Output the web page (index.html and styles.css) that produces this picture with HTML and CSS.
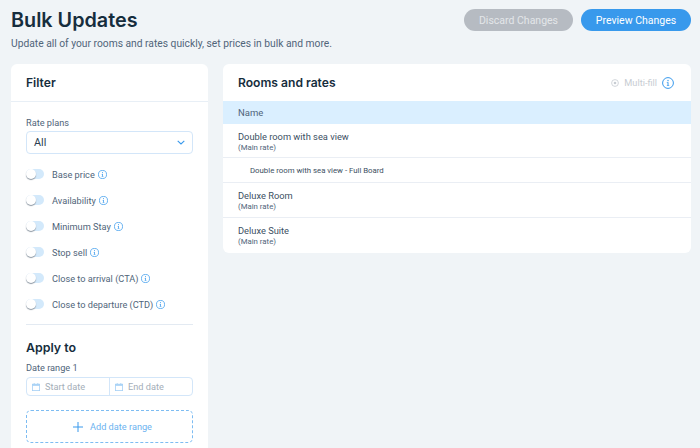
FILE: index.html
```html
<!DOCTYPE html>
<html lang="en">
<head>
<meta charset="utf-8">
<title>Bulk Updates</title>
<link rel="stylesheet" href="styles.css">
</head>
<body>
<svg class="defs" width="0" height="0" aria-hidden="true">
  <symbol id="info" viewBox="0 0 12 12">
    <circle cx="6" cy="6" r="5.4" fill="none" stroke="currentColor" stroke-width="1"/>
    <path d="M4.8 5.3H6.5V8.4H7.3V9H4.8V8.4H5.5V5.9H4.8Z" fill="currentColor"/>
    <rect x="5.4" y="2.9" width="1.2" height="1.3" fill="currentColor"/>
  </symbol>
  <symbol id="cal" viewBox="0 0 10 10">
    <rect x="0.5" y="1.5" width="9" height="8" fill="none" stroke="currentColor"/>
    <rect x="0.5" y="1.5" width="9" height="2" fill="currentColor"/>
    <rect x="2.2" y="0" width="1" height="2" fill="currentColor"/>
    <rect x="6.8" y="0" width="1" height="2" fill="currentColor"/>
  </symbol>
</svg>
<header class="top">
  <div class="top-text">
    <h1 class="title">Bulk Updates</h1>
    <p class="subtitle">Update all of your rooms and rates quickly, set prices in bulk and more.</p>
  </div>
  <div class="actions">
    <button class="btn btn-muted">Discard Changes</button>
    <button class="btn btn-primary">Preview Changes</button>
  </div>
</header>
<main class="columns">
  <section class="card filter">
    <h2 class="card-title filter-head">Filter</h2>
    <div class="filter-body">
      <label class="field-label">Rate plans</label>
      <div class="select"><span>All</span>
        <svg class="chev" width="8" height="5" viewBox="0 0 8 5"><path d="M.7.8 4 4 7.3.8" fill="none" stroke="currentColor" stroke-width="1.1"/></svg>
      </div>
      <ul class="toggles">
        <li class="toggle-row"><span class="toggle"></span><span>Base price</span><svg class="info-s"><use href="#info"/></svg></li>
        <li class="toggle-row"><span class="toggle"></span><span>Availability</span><svg class="info-s"><use href="#info"/></svg></li>
        <li class="toggle-row"><span class="toggle"></span><span>Minimum Stay</span><svg class="info-s"><use href="#info"/></svg></li>
        <li class="toggle-row"><span class="toggle"></span><span>Stop sell</span><svg class="info-s"><use href="#info"/></svg></li>
        <li class="toggle-row"><span class="toggle"></span><span>Close to arrival (CTA)</span><svg class="info-s"><use href="#info"/></svg></li>
        <li class="toggle-row"><span class="toggle"></span><span>Close to departure (CTD)</span><svg class="info-s"><use href="#info"/></svg></li>
      </ul>
      <hr class="rule">
      <h2 class="card-title apply">Apply to</h2>
      <label class="field-label range-label">Date range 1</label>
      <div class="dates">
        <div class="date"><svg class="cal"><use href="#cal"/></svg><span>Start date</span></div>
        <div class="date date-end"><svg class="cal"><use href="#cal"/></svg><span>End date</span></div>
      </div>
      <div class="add-range">
        <svg width="10" height="10" viewBox="0 0 10 10"><path d="M5 0v10M0 5h10" stroke="currentColor" fill="none"/></svg>
        <span>Add date range</span>
      </div>
    </div>
  </section>
  <section class="card rooms">
    <div class="rooms-head">
      <h2 class="card-title">Rooms and rates</h2>
      <div class="multi">
        <svg width="8" height="8" viewBox="0 0 8 8"><circle cx="4" cy="4" r="3.4" fill="none" stroke="currentColor" stroke-width=".8"/><circle cx="4" cy="4" r="1.3" fill="currentColor"/></svg>
        <span class="multi-text">Multi-fill</span>
        <svg class="info-l"><use href="#info"/></svg>
      </div>
    </div>
    <div class="name-row">Name</div>
    <div class="row row-first"><div class="room">Double room with sea view</div><div class="rate">(Main rate)</div></div>
    <div class="row row-sub">Double room with sea view - Full Board</div>
    <div class="row"><div class="room">Deluxe Room</div><div class="rate">(Main rate)</div></div>
    <div class="row row-last"><div class="room">Deluxe Suite</div><div class="rate">(Main rate)</div></div>
  </section>
</main>
</body>
</html>
```

FILE: styles.css
```css
* { box-sizing: border-box; }
html, body { height: 100%; }
body {
  margin: 0;
  height: 448px;
  overflow: hidden;
  background: #f0f4f7;
  font-family: Roboto, "Noto Sans", sans-serif;
  color: #2b3d50;
}
.defs { position: absolute; }
.top {
  display: flex;
  justify-content: space-between;
  align-items: flex-start;
  padding: 9px 9px 0 11px;
  height: 64px;
}
.title {
  margin: 0;
  font-family: Inter, sans-serif;
  font-size: 19.8px;
  line-height: 22px;
  font-weight: 600;
  color: #162d3d;
}
.subtitle {
  margin: 6px 0 0;
  font-size: 10.27px;
  line-height: 14px;
  color: #50657a;
}
.actions { display: flex; gap: 8px; }
.btn {
  height: 22px;
  width: 110px;
  padding: 0;
  border: 0;
  border-radius: 11px;
  font: 400 10.5px Roboto, sans-serif;
  color: #fff;
}
.btn-muted { width: 109px; background: #b6bbc2; color: #e3e6e9; }
.btn-primary { background: #3899ec; }
.columns { display: flex; gap: 15px; padding: 0 9px 0 11px; align-items: flex-start; }
.card { background: #fff; border-radius: 6px; overflow: hidden; }
.card-title { margin: 0; font-family: Inter, sans-serif; font-size: 12.1px; line-height: 16px; font-weight: 600; color: #162d3d; }
.filter { width: 197px; flex: none; height: 400px; }
.filter-head { height: 38px; padding: 11px 15px 0; border-bottom: 1px solid #e8eff6; }
.filter-body { padding: 15px 15px 0; }
.field-label { display: block; font-size: 9.2px; line-height: 12px; color: #50657a; }
.select {
  margin-top: 2px;
  height: 23px;
  border: 1px solid #d3e6f9;
  border-radius: 4px;
  padding: 0 7px;
  display: flex;
  align-items: center;
  justify-content: space-between;
  font-size: 10.8px;
  color: #2b3d50;
}
.chev { color: #3899ec; }
.toggles { list-style: none; margin: 7px 0 0; padding: 0; }
.toggle-row {
  height: 26px;
  display: flex;
  align-items: center;
  font-size: 9.2px;
  color: #50657a;
}
.toggle {
  position: relative;
  width: 18px;
  height: 10px;
  margin-right: 8px;
  background: #d3e9fb;
  border-radius: 5px;
  flex: none;
}
.toggle::before {
  content: "";
  position: absolute;
  left: 0;
  top: 0;
  width: 10px;
  height: 10px;
  border-radius: 50%;
  background: #fff;
  box-shadow: 0 1px 1px #8a95a0;
}
.info-s { width: 9px; height: 9px; margin-left: 3px; color: #3899ec; flex: none; }
.rule { margin: 7px 0 0; border: 0; border-top: 1px solid #e3eaf2; }
.apply { margin-top: 15px; font-size: 12.4px; }
.range-label { margin-top: 6px; }
.dates {
  display: flex;
  margin-top: 3px;
  height: 19px;
  border: 1px solid #d3e6f9;
  border-radius: 4px;
}
.date {
  flex: 1;
  display: flex;
  align-items: center;
  gap: 5px;
  padding-left: 5px;
  font-size: 9.2px;
  color: #a4aeb8;
}
.date-end { border-left: 1px solid #d3e6f9; }
.cal { width: 8px; height: 8px; color: #a5d0f5; }
.add-range {
  margin-top: 14px;
  height: 33px;
  padding-left: 6px;
  border: 1px dashed #7dbcf2;
  border-radius: 5px;
  display: flex;
  align-items: center;
  justify-content: center;
  gap: 7px;
  font-size: 9.2px;
  color: #6cb3f0;
}
.add-range svg { color: #3899ec; }
.rooms { width: 468px; flex: none; }
.rooms-head {
  height: 37px;
  padding: 0 17px 0 15px;
  display: flex;
  align-items: center;
  justify-content: space-between;
}
.multi { display: flex; align-items: center; color: #c7ccd2; font-size: 9.2px; }
.multi-text { margin: 0 5px; }
.info-l { width: 12px; height: 12px; color: #3899ec; }
.name-row {
  height: 23px;
  padding-left: 15px;
  display: flex;
  align-items: center;
  background: #daefff;
  font-size: 9.5px;
  color: #50657a;
}
.row {
  height: 35px;
  padding: 7px 15px 0;
  border-bottom: 1px solid #eaeef4;
}
.row-first { height: 34px; }
.row-sub {
  height: 25px;
  padding: 1px 27px 0;
  display: flex;
  align-items: center;
  font-size: 7.8px;
  color: #3c4f62;
}
.row-last { border-bottom: 0; }
.room { font-size: 9.3px; line-height: 12px; color: #3c4f62; }
.rate { font-size: 7.8px; line-height: 9px; color: #50657a; }
```
